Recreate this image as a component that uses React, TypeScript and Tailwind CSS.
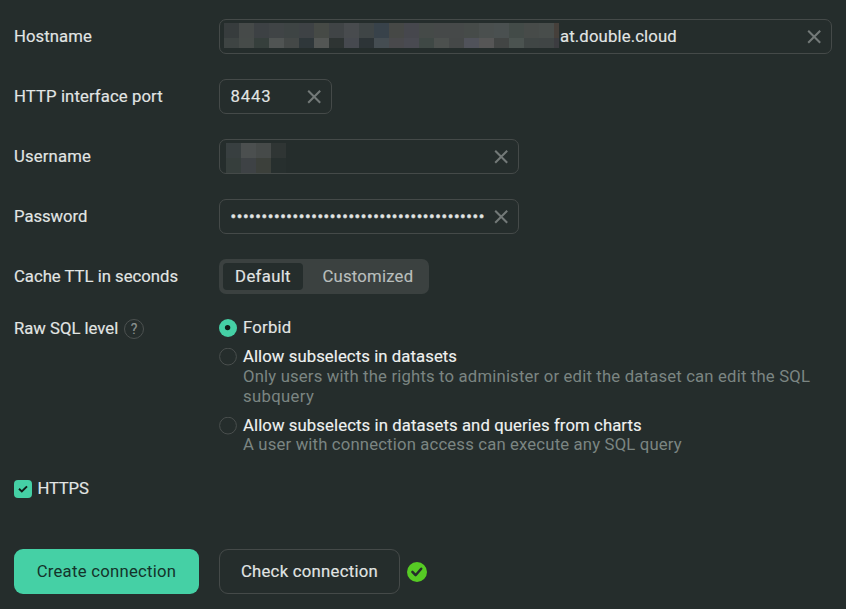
import type { ReactNode } from "react";

const hostMosaic = [
  ["#373c3d", "#464a49", "#3d4144", "#404446", "#3e4444", "#3e4245", "#464a46", "#404446", "#484b4e", "#3f4546", "#38424a", "#464846", "#46474d", "#454a48", "#464949", "#464949", "#464b49", "#4a4f4e", "#4a5050", "#434b48", "#474b49", "#484d4b", "#46403b"],
  ["#3e4443", "#464b49", "#363f3c", "#505453", "#444847", "#2f373a", "#535654", "#2e3433", "#46494f", "#2d3437", "#454d52", "#49494c", "#494a51", "#3f4845", "#4c504e", "#454848", "#50525a", "#565656", "#424544", "#4b5350", "#404645", "#404545", "#3c3c40"],
];
const userMosaic = [
  ["#383f40", "#4b4f4f", "#464a49", "#2f3534"],
  ["#363e3c", "#3e4245", "#3c403b", "#272f2e"],
];

function Mosaic({ rows, className }: { rows: string[][]; className: string }) {
  return (
    <div className={`flex shrink-0 flex-col overflow-hidden ${className}`}>
      {rows.map((row, r) => (
        <div key={r} className="flex h-[15px] shrink-0">
          {row.map((color, i) => (
            <span key={i} className="h-[15px] w-[15px] shrink-0" style={{ backgroundColor: color }} />
          ))}
        </div>
      ))}
    </div>
  );
}

function ClearIcon() {
  return (
    <svg className="mr-[10px] ml-auto h-[14px] w-[14px] shrink-0" viewBox="0 0 14 14" fill="none" stroke="#737978" strokeWidth="2">
      <path d="M1.2 0.7l12 12M13.2 0.7l-12 12" />
    </svg>
  );
}

function Row({ label, spacing, children }: { label: string; spacing: string; children: ReactNode }) {
  return (
    <div className="flex h-[35px] items-center">
      <div className={`w-[205px] shrink-0 ${spacing}`}>{label}</div>
      {children}
    </div>
  );
}

function Field({ className, children }: { className: string; children: ReactNode }) {
  return (
    <div className={`flex h-[35px] items-center rounded-[7px] border border-[#454a49] ${className}`}>
      {children}
      <ClearIcon />
    </div>
  );
}

function Radio({ checked = false }: { checked?: boolean }) {
  return checked ? (
    <svg className="mt-px h-[18px] w-[18px] shrink-0" viewBox="0 0 18 18">
      <circle cx="9" cy="9" r="9" fill="#45d0a5" />
      <circle cx="8.6" cy="8.6" r="2.7" fill="#101c18" />
    </svg>
  ) : (
    <svg className="mt-px h-[18px] w-[18px] shrink-0" viewBox="0 0 18 18">
      <circle cx="9" cy="8.6" r="8.4" fill="none" stroke="#4a4f4e" />
    </svg>
  );
}

export default function App() {
  return (
    <div className="h-[609px] w-[846px] overflow-hidden bg-[#252d2c] pt-[19px] pl-[14px] font-['Roboto',sans-serif] text-[16.7px] leading-5 whitespace-nowrap text-[#e2e5e4] [-webkit-text-stroke:0.15px]">
      <div className="flex flex-col gap-[25px]">
        <Row label="Hostname" spacing="tracking-[0.08px]">
          <Field className="w-[613px] pl-1">
            <Mosaic rows={hostMosaic} className="-mt-[2px] h-[25px] w-[335px]" />
            <span className="pl-px tracking-[0.145px]">at.double.cloud</span>
          </Field>
        </Row>
        <Row label="HTTP interface port" spacing="tracking-[0.11px]">
          <Field className="w-[113px] pl-[10.5px]">
            <span className="tracking-[0.87px]">8443</span>
          </Field>
        </Row>
        <Row label="Username" spacing="tracking-[0.154px]">
          <Field className="w-[300px] pl-[6px]">
            <Mosaic rows={userMosaic} className="mt-[3px] h-[30px] w-[60px]" />
          </Field>
        </Row>
        <Row label="Password" spacing="tracking-[-0.035px]">
          <Field className="w-[300px] pl-[10.5px]">
            <span className="tracking-[0.575px] [-webkit-text-stroke:0.4px]">{"•".repeat(41)}</span>
          </Field>
        </Row>
        <Row label="Cache TTL in seconds" spacing="tracking-[0px]">
          <div className="flex h-[35px] w-[210px] items-center rounded-[7px] bg-[#3b4140] p-1">
            <div className="flex h-[27px] w-20 items-center justify-center rounded bg-[#252d2c] tracking-[0.34px]">Default</div>
            <div className="flex-1 pl-[19.5px] tracking-[0.22px] text-[#b9bebc]">Customized</div>
          </div>
        </Row>
      </div>

      <div className="mt-6 flex items-start">
        <div className="flex w-[205px] shrink-0 items-center pt-px">
          <span className="w-[110px] tracking-[0px]">Raw SQL level</span>
          <span className="flex h-5 w-5 items-center justify-center rounded-full border border-[#4c5150] text-[14px] text-[#8b9290]">?</span>
        </div>
        <div className="flex w-[600px] flex-col gap-[9px]">
          <div className="flex gap-[6px]">
            <Radio checked />
            <span className="tracking-[0.23px]">Forbid</span>
          </div>
          <div className="flex gap-[6px]">
            <Radio />
            <div>
              <div className="tracking-[0.086px] text-[#eff1f0]">Allow subselects in datasets</div>
              <div className="text-[#7b8582] [-webkit-text-stroke:0px]">
                <span className="tracking-[0.176px]">Only users with the rights to administer or edit the dataset can edit the SQL</span>
                <br />
                <span className="tracking-[0.35px]">subquery</span>
              </div>
            </div>
          </div>
          <div className="flex gap-[6px]">
            <Radio />
            <div>
              <div className="tracking-[0.108px] text-[#eff1f0]">Allow subselects in datasets and queries from charts</div>
              <div className="-mt-px tracking-[0.165px] text-[#7b8582] [-webkit-text-stroke:0px]">A user with connection access can execute any SQL query</div>
            </div>
          </div>
        </div>
      </div>

      <div className="mt-6 flex h-5 items-center gap-[5.5px]">
        <span className="flex h-[18px] w-[18px] items-center justify-center rounded bg-[#45d0a5]">
          <svg className="h-[10px] w-[10px]" viewBox="0 0 10 10" fill="none" stroke="#101c18" strokeWidth="1.9">
            <path d="M1 4.8l2.8 2.7L9 2.3" />
          </svg>
        </span>
        <span className="tracking-[-0.21px]">HTTPS</span>
      </div>

      <div className="mt-[50px] flex h-[45px] items-center">
        <button className="h-[45px] w-[185px] rounded-[9px] bg-[#45d0a5] tracking-[0.263px] text-[#14332a] [-webkit-text-stroke:0px]">Create connection</button>
        <button className="ml-5 h-[45px] w-[181px] rounded-[9px] border border-[#454a49] tracking-[0.28px]">Check connection</button>
        <svg className="ml-[7px] h-5 w-5" viewBox="0 0 20 20" fill="none">
          <circle cx="10" cy="10" r="10" fill="#56cb24" />
          <path d="M5.4 9.9l3.2 3.3 5.6-6.4" stroke="#252d2c" strokeWidth="2.5" strokeLinecap="round" strokeLinejoin="round" />
        </svg>
      </div>
    </div>
  );
}
